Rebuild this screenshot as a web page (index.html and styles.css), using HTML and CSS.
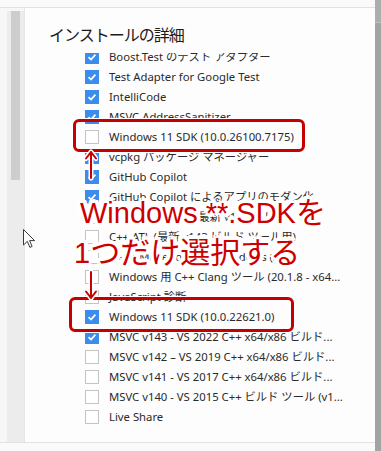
FILE: index.html
```html
<!DOCTYPE html>
<html lang="ja">
<head>
<meta charset="utf-8">
<link rel="stylesheet" href="styles.css">
</head>
<body>
<div class="window">
  <div class="main">
    <div class="topbar"></div>
    <div class="middle">
      <div class="gutter"><div class="track"><div class="thumb"></div></div></div>
      <div class="content">
        <h2 class="title">インストールの詳細</h2>
        <div class="viewport">
          <ul class="list">
            <li class="row"><span class="cb on"><svg viewBox="0 0 14 14"><path d="M3 7.2 L5.8 10 L11 4.2"/></svg></span><span class="lbl">Boost.Test のテスト アダプター</span></li>
            <li class="row"><span class="cb on"><svg viewBox="0 0 14 14"><path d="M3 7.2 L5.8 10 L11 4.2"/></svg></span><span class="lbl">Test Adapter for Google Test</span></li>
            <li class="row"><span class="cb on"><svg viewBox="0 0 14 14"><path d="M3 7.2 L5.8 10 L11 4.2"/></svg></span><span class="lbl">IntelliCode</span></li>
            <li class="row"><span class="cb on"><svg viewBox="0 0 14 14"><path d="M3 7.2 L5.8 10 L11 4.2"/></svg></span><span class="lbl">MSVC AddressSanitizer</span></li>
            <li class="row"><span class="cb"></span><span class="lbl">Windows 11 SDK (10.0.26100.7175)</span></li>
            <li class="row"><span class="cb on"><svg viewBox="0 0 14 14"><path d="M3 7.2 L5.8 10 L11 4.2"/></svg></span><span class="lbl">vcpkg パッケージ マネージャー</span></li>
            <li class="row"><span class="cb on"><svg viewBox="0 0 14 14"><path d="M3 7.2 L5.8 10 L11 4.2"/></svg></span><span class="lbl">GitHub Copilot</span></li>
            <li class="row"><span class="cb on"><svg viewBox="0 0 14 14"><path d="M3 7.2 L5.8 10 L11 4.2"/></svg></span><span class="lbl">GitHub Copilot によるアプリのモダン化</span></li>
            <li class="row"><span class="cb"></span><span class="lbl">最新の C++ MFC (最新 v143 ビルド...</span></li>
            <li class="row"><span class="cb"></span><span class="lbl">C++ ATL (最新 v143 ビルド ツール用)</span></li>
            <li class="row"><span class="cb"></span><span class="lbl">C++ CMake tools for Windows (x64)</span></li>
            <li class="row"><span class="cb"></span><span class="lbl">Windows 用 C++ Clang ツール (20.1.8 - x64...</span></li>
            <li class="row"><span class="cb"></span><span class="lbl">JavaScript 診断</span></li>
            <li class="row"><span class="cb on"><svg viewBox="0 0 14 14"><path d="M3 7.2 L5.8 10 L11 4.2"/></svg></span><span class="lbl">Windows 11 SDK (10.0.22621.0)</span></li>
            <li class="row"><span class="cb on"><svg viewBox="0 0 14 14"><path d="M3 7.2 L5.8 10 L11 4.2"/></svg></span><span class="lbl">MSVC v143 - VS 2022 C++ x64/x86 ビルド...</span></li>
            <li class="row"><span class="cb"></span><span class="lbl">MSVC v142 – VS 2019 C++ x64/x86 ビルド...</span></li>
            <li class="row"><span class="cb"></span><span class="lbl">MSVC v141 - VS 2017 C++ x64/x86 ビルド...</span></li>
            <li class="row"><span class="cb"></span><span class="lbl">MSVC v140 - VS 2015 C++ ビルド ツール (v1...</span></li>
            <li class="row"><span class="cb"></span><span class="lbl">Live Share</span></li>
          </ul>
        </div>
      </div>
    </div>
    <div class="bottombar"></div>
  </div>
  <div class="vscroll"><div class="vscroll-top"></div></div>

  <div class="mark mark1"></div>
  <div class="mark mark2"></div>

  <svg class="arrow arrow-up" viewBox="0 0 14 32">
    <path class="halo" d="M7 3 V29 M2 9.5 L7 3 L12 9.5"/>
    <path class="ink" d="M7 3 V29 M2 9.5 L7 3 L12 9.5"/>
  </svg>
  <svg class="arrow arrow-down" viewBox="0 0 14 32">
    <path class="halo" d="M7 3 V29 M2 22.5 L7 29 L12 22.5"/>
    <path class="ink" d="M7 3 V29 M2 22.5 L7 29 L12 22.5"/>
  </svg>

  <div class="note">
    <div class="note-line">Windows **.SDK<span class="jp">を</span></div>
    <div class="note-line second">1<span class="jp">つだけ選択する</span></div>
  </div>

  <svg class="cursor" viewBox="0 0 13 20">
    <path d="M0.5 0.5 V16 L4.3 12.4 L6.9 18.4 L9.1 17.4 L6.6 11.6 H11.6 Z"/>
  </svg>
</div>
</body>
</html>
```

FILE: styles.css
```css
* { box-sizing: border-box; }
html, body { margin: 0; padding: 0; }
body {
  width: 381px;
  height: 451px;
  overflow: hidden;
  background: #fafafa;
  font-family: "Noto Sans", "Noto Sans CJK JP", sans-serif;
}
.window {
  position: relative;
  display: flex;
  width: 381px;
  height: 451px;
}
.main {
  flex: 1;
  display: flex;
  flex-direction: column;
}
.topbar {
  height: 8px;
  background: #fafafa;
  border-bottom: 1px solid #e2e2e2;
}
.middle {
  height: 434px;
  display: flex;
}
.gutter {
  width: 25px;
  padding: 3px 0 0 7px;
  background: #f7f7f7;
  border-right: 1px solid #e6e6e6;
}
.track {
  width: 17px;
  height: 100%;
  padding: 0 4px;
  background: #ececec;
}
.thumb {
  width: 9px;
  height: 169px;
  background: #cdcdcd;
}
.content {
  flex: 1;
  background: #fdfdfd;
  display: flex;
  flex-direction: column;
}
.title {
  margin: 0;
  padding: 16px 0 0 24px;
  font-family: "Noto Sans CJK JP", sans-serif;
  font-weight: 400;
  font-size: 16px;
  line-height: 20px;
  letter-spacing: -1px;
  color: #1b1b1b;
}
.viewport {
  margin-top: 9px;
  flex: 1;
  overflow: hidden;
}
.list {
  list-style: none;
  margin: -6px 0 0;
  padding: 0;
}
.row {
  height: 20px;
  display: flex;
  align-items: center;
  gap: 10px;
  padding-left: 60px;
}
.cb {
  flex: none;
  width: 14px;
  height: 14px;
  border: 1px solid #c4c4c4;
  background: #ffffff;
}
.cb.on {
  background: #3b8cec;
  border-color: #3b8cec;
  display: flex;
}
.cb svg {
  width: 12px;
  height: 12px;
}
.cb path {
  fill: none;
  stroke: #ffffff;
  stroke-width: 2;
}
.lbl {
  font-size: 11.3px;
  line-height: 20px;
  color: #2a2a2a;
  white-space: nowrap;
}
.bottombar {
  height: 9px;
  background: #fafafa;
  border-top: 1px solid #e2e2e2;
}
.vscroll {
  width: 6px;
  background: #a3a3a3;
}
.vscroll-top {
  height: 23px;
  background: #adadad;
  border-bottom: 1px solid #bdbdbd;
}

/* annotations */
.mark {
  position: absolute;
  border: 3px solid #c40000;
  border-radius: 6px;
  box-shadow: 0 0 0 1px #ffffff;
}
.mark1 { left: 73px; top: 119px; width: 232px; height: 33px; }
.mark2 { left: 69px; top: 297px; width: 225px; height: 35px; }

.arrow {
  position: absolute;
  width: 14px;
  height: 32px;
}
.arrow path { fill: none; stroke-linecap: round; stroke-linejoin: round; }
.arrow .halo { stroke: #ffffff; stroke-width: 5; }
.arrow .ink { stroke: #c80000; stroke-width: 2; }
.arrow-up { left: 84px; top: 149px; }
.arrow-down { left: 84px; top: 269px; }

.note {
  position: absolute;
  left: 80px;
  top: 192px;
  font-family: "Liberation Sans", "Noto Sans CJK JP", sans-serif;
  font-size: 29px;
  line-height: 37px;
  color: #cc0000;
  white-space: nowrap;
  text-shadow:
    -3px -3px 0 #fff, 3px -3px 0 #fff, -3px 3px 0 #fff, 3px 3px 0 #fff,
    0 -4px 0 #fff, 0 4px 0 #fff, -4px 0 0 #fff, 4px 0 0 #fff,
    -2px -1px 0 #fff, 2px 1px 0 #fff, -1px 2px 0 #fff, 1px -2px 0 #fff,
    0 0 4px #fff;
}
.note .jp {
  font-family: "Noto Sans CJK JP", sans-serif;
  font-size: 30px;
}
.note-line.second { margin-left: -6px; }

.cursor {
  position: absolute;
  left: 23px;
  top: 229px;
  width: 13px;
  height: 20px;
}
.cursor path {
  fill: #ffffff;
  stroke: #3a3a3a;
  stroke-width: 1;
  stroke-linejoin: miter;
}
```
